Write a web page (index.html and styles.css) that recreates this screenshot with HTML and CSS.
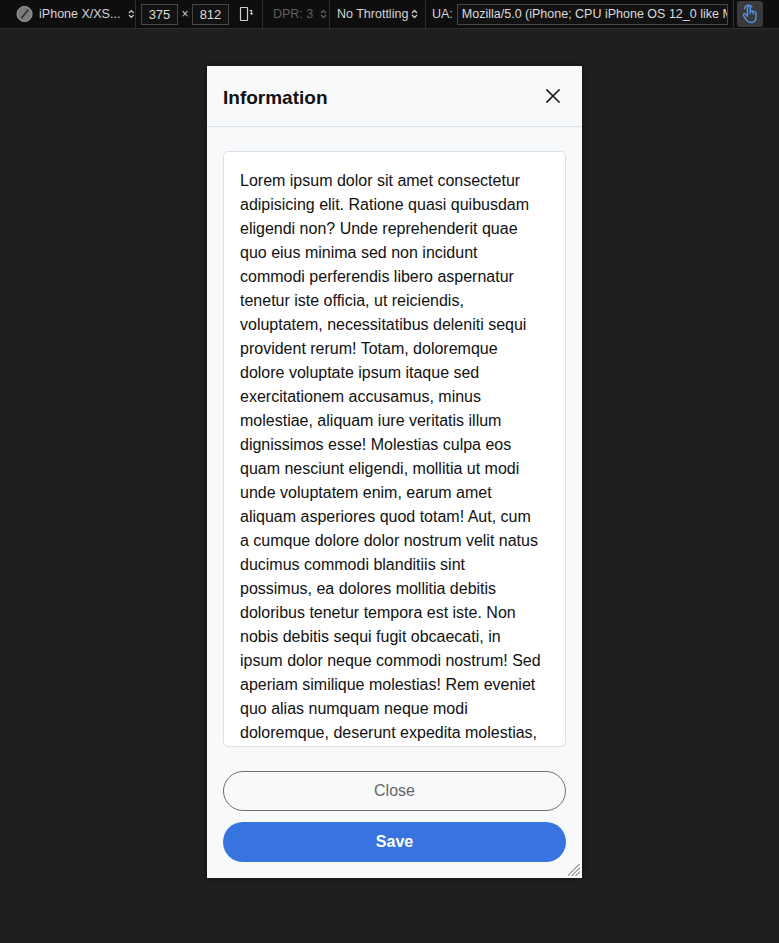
FILE: index.html
```html
<!DOCTYPE html>
<html lang="en">
<head>
<meta charset="utf-8">
<title>Information</title>
<link rel="stylesheet" href="styles.css">
</head>
<body>
<div class="toolbar">
  <div class="tb-group g-device">
    <svg class="tb-compass" width="18" height="18" viewBox="0 0 18 18"><circle cx="9" cy="9" r="8" fill="#7c7c7c" stroke="#a0a0a0" stroke-width="1"/><line x1="12.5" y1="5" x2="6" y2="13" stroke="#2a2a2a" stroke-width="1.6" stroke-linecap="round"/></svg>
    <span class="tb-text">iPhone X/XS...</span>
    <svg class="tb-updown" width="7" height="10" viewBox="0 0 7 10"><path d="M1 4 L3.5 1.5 L6 4 M1 6 L3.5 8.5 L6 6" fill="none" stroke="#cfcfcf" stroke-width="1.3"/></svg>
  </div>
  <div class="tb-group g-size">
    <span class="tb-input tb-num">375</span>
    <span class="tb-times">×</span>
    <span class="tb-input tb-num">812</span>
    <svg class="tb-rotate" width="16" height="16" viewBox="0 0 16 16"><rect x="1.5" y="1.5" width="7" height="13" rx="0.5" fill="none" stroke="#cfcfcf" stroke-width="1.2"/><path d="M10.5 4.5 H12.5 V8" fill="none" stroke="#cfcfcf" stroke-width="1.2"/><path d="M10.8 7.2 L12.5 9.2 L14.2 7.2 Z" fill="#cfcfcf"/></svg>
  </div>
  <div class="tb-group g-dpr">
    <span class="tb-text dim">DPR: 3</span>
    <svg class="tb-updown" width="7" height="10" viewBox="0 0 7 10"><path d="M1 4 L3.5 1.5 L6 4 M1 6 L3.5 8.5 L6 6" fill="none" stroke="#5e5e5e" stroke-width="1.3"/></svg>
  </div>
  <div class="tb-group g-throttle">
    <span class="tb-text">No Throttling</span>
    <svg class="tb-updown" width="7" height="10" viewBox="0 0 7 10"><path d="M1 4 L3.5 1.5 L6 4 M1 6 L3.5 8.5 L6 6" fill="none" stroke="#cfcfcf" stroke-width="1.3"/></svg>
  </div>
  <div class="tb-group g-ua">
    <span class="tb-text">UA:</span>
    <span class="tb-input tb-ua">Mozilla/5.0 (iPhone; CPU iPhone OS 12_0 like Mac OS X)</span>
  </div>
  <div class="tb-group g-touch">
    <span class="tb-touch">
      <svg width="18" height="20" viewBox="0 0 18 20"><path d="M6.5 11 V3.2 a1.4 1.4 0 0 1 2.8 0 V9.5 M9.3 8.2 a1.4 1.4 0 0 1 2.8 0 V10 M12.1 9 a1.4 1.4 0 0 1 2.8 0 V13.5 c0 3 -2 5 -5 5 H9.5 c-2 0 -3.2 -1 -4.2 -2.6 L2.6 11.6 a1.3 1.3 0 0 1 2.1 -1.5 L6.5 12.3" fill="none" stroke="#4f95ea" stroke-width="1.4" stroke-linejoin="round" stroke-linecap="round"/><path d="M3.6 4.6 a4 4 0 0 1 7.4 -1.6" fill="none" stroke="#4f95ea" stroke-width="1.2" stroke-linecap="round"/></svg>
    </span>
  </div>
</div>

<div class="viewport">
  <div class="modal">
    <div class="modal-header">
      <h2 class="modal-title">Information</h2>
      <button class="modal-close" aria-label="Close">
        <svg width="14" height="14" viewBox="0 0 14 14"><path d="M1 1 L13 13 M13 1 L1 13" stroke="#1a1a1a" stroke-width="1.6" stroke-linecap="square"/></svg>
      </button>
    </div>
    <div class="modal-body">
      <div class="scroll-box">
        <p class="scroll-text">Lorem ipsum dolor sit amet consectetur<br>adipisicing elit. Ratione quasi quibusdam<br>eligendi non? Unde reprehenderit quae<br>quo eius minima sed non incidunt<br>commodi perferendis libero aspernatur<br>tenetur iste officia, ut reiciendis,<br>voluptatem, necessitatibus deleniti sequi<br>provident rerum! Totam, doloremque<br>dolore voluptate ipsum itaque sed<br>exercitationem accusamus, minus<br>molestiae, aliquam iure veritatis illum<br>dignissimos esse! Molestias culpa eos<br>quam nesciunt eligendi, mollitia ut modi<br>unde voluptatem enim, earum amet<br>aliquam asperiores quod totam! Aut, cum<br>a cumque dolore dolor nostrum velit natus<br>ducimus commodi blanditiis sint<br>possimus, ea dolores mollitia debitis<br>doloribus tenetur tempora est iste. Non<br>nobis debitis sequi fugit obcaecati, in<br>ipsum dolor neque commodi nostrum! Sed<br>aperiam similique molestias! Rem eveniet<br>quo alias numquam neque modi<br>doloremque, deserunt expedita molestias,<br>consequuntur nam laboriosam quas.</p>
      </div>
    </div>
    <div class="modal-footer">
      <button class="btn btn-outline">Close</button>
      <button class="btn btn-primary">Save</button>
    </div>
    <span class="resize-grip"></span>
  </div>
</div>
</body>
</html>
```

FILE: styles.css
```css
html, body {
  margin: 0;
  padding: 0;
}
body {
  width: 779px;
  height: 943px;
  background: #1f1f1f;
  font-family: "Liberation Sans", Arial, sans-serif;
  overflow: hidden;
}

/* ---------- toolbar ---------- */
.toolbar {
  display: flex;
  height: 28px;
  background: #0e0e0e;
  border-bottom: 1px solid #2e2e2e;
  color: #d4d4d4;
  font-size: 12.5px;
}
.tb-group {
  display: flex;
  align-items: center;
  box-sizing: border-box;
  height: 28px;
  border-right: 1px solid #2f2f2f;
}
.g-device { width: 136px; padding-left: 16px; }
.g-size { width: 127px; padding-left: 5px; }
.g-dpr { width: 67px; padding-left: 10px; }
.g-throttle { width: 96px; padding-left: 7px; }
.g-ua { width: 308px; padding-left: 6px; }
.g-touch { border-right: none; padding-left: 3px; }

.tb-compass { margin-right: 6px; }
.tb-updown { margin-left: 8px; }
.g-throttle .tb-updown { margin-left: 3px; }
.g-dpr .tb-updown { margin-left: 7px; }
.tb-text { white-space: nowrap; }
.tb-text.dim { color: #5f5f5f; }

.tb-input {
  display: flex;
  align-items: center;
  box-sizing: border-box;
  height: 21px;
  border: 1px solid #474747;
  background: #121212;
  color: #dcdcdc;
  white-space: nowrap;
  overflow: hidden;
}
.tb-num {
  width: 37px;
  justify-content: center;
  font-size: 13px;
}
.tb-times {
  width: 14px;
  text-align: center;
  color: #cfcfcf;
  font-size: 12px;
}
.tb-rotate { margin-left: 10px; }
.tb-ua {
  width: 271px;
  margin-left: 4px;
  padding-left: 4px;
  font-size: 12.5px;
}
.tb-touch {
  display: flex;
  align-items: center;
  justify-content: center;
  width: 26px;
  height: 26px;
  border-radius: 3px;
  background: #3a3a3c;
}

/* ---------- modal ---------- */
.viewport {
  display: flex;
  justify-content: center;
  padding-top: 37px;
  padding-left: 10px;
}
.modal {
  position: relative;
  display: flex;
  flex-direction: column;
  box-sizing: border-box;
  width: 375px;
  height: 812px;
  background: #f8f9fb;
  box-shadow: 0 0 6px rgba(0, 0, 0, 0.5);
  color: #111;
}
.modal-header {
  display: flex;
  align-items: center;
  justify-content: space-between;
  height: 60px;
  padding: 0 16px;
  border-bottom: 1px solid #dcdfe3;
  flex: none;
}
.modal-title {
  margin: 3px 0 0;
  font-size: 19px;
  font-weight: bold;
  color: #111;
}
.modal-close {
  display: flex;
  align-items: center;
  justify-content: center;
  width: 28px;
  height: 28px;
  margin-right: -1px;
  padding: 0;
  border: none;
  background: transparent;
}
.modal-body {
  flex: 1;
  display: flex;
  flex-direction: column;
  min-height: 0;
  padding: 24px 16px 0;
}
.scroll-box {
  flex: 1;
  min-height: 0;
  overflow: hidden;
  background: #fff;
  border: 1px solid #dcdfe3;
  border-radius: 5px;
  padding: 17px 16px 0;
}
.scroll-text {
  margin: 0;
  font-size: 16px;
  line-height: 24px;
  color: #111;
  white-space: nowrap;
}
.modal-footer {
  display: flex;
  flex-direction: column;
  gap: 11px;
  padding: 24px 16px 16px;
  flex: none;
}
.btn {
  box-sizing: border-box;
  height: 40px;
  border-radius: 20px;
  font-family: "Liberation Sans", Arial, sans-serif;
  font-size: 16px;
  cursor: pointer;
}
.btn-outline {
  background: transparent;
  border: 1px solid #6e6e6e;
  color: #666;
}
.btn-primary {
  background: #3874e0;
  border: none;
  color: #fff;
  font-weight: bold;
}
.resize-grip {
  position: absolute;
  right: 2px;
  bottom: 2px;
  width: 12px;
  height: 12px;
  background: linear-gradient(135deg,
    transparent 0 45%, #a8a8a8 45% 52%,
    transparent 52% 62%, #a8a8a8 62% 69%,
    transparent 69% 79%, #a8a8a8 79% 86%,
    transparent 86%);
}
```
